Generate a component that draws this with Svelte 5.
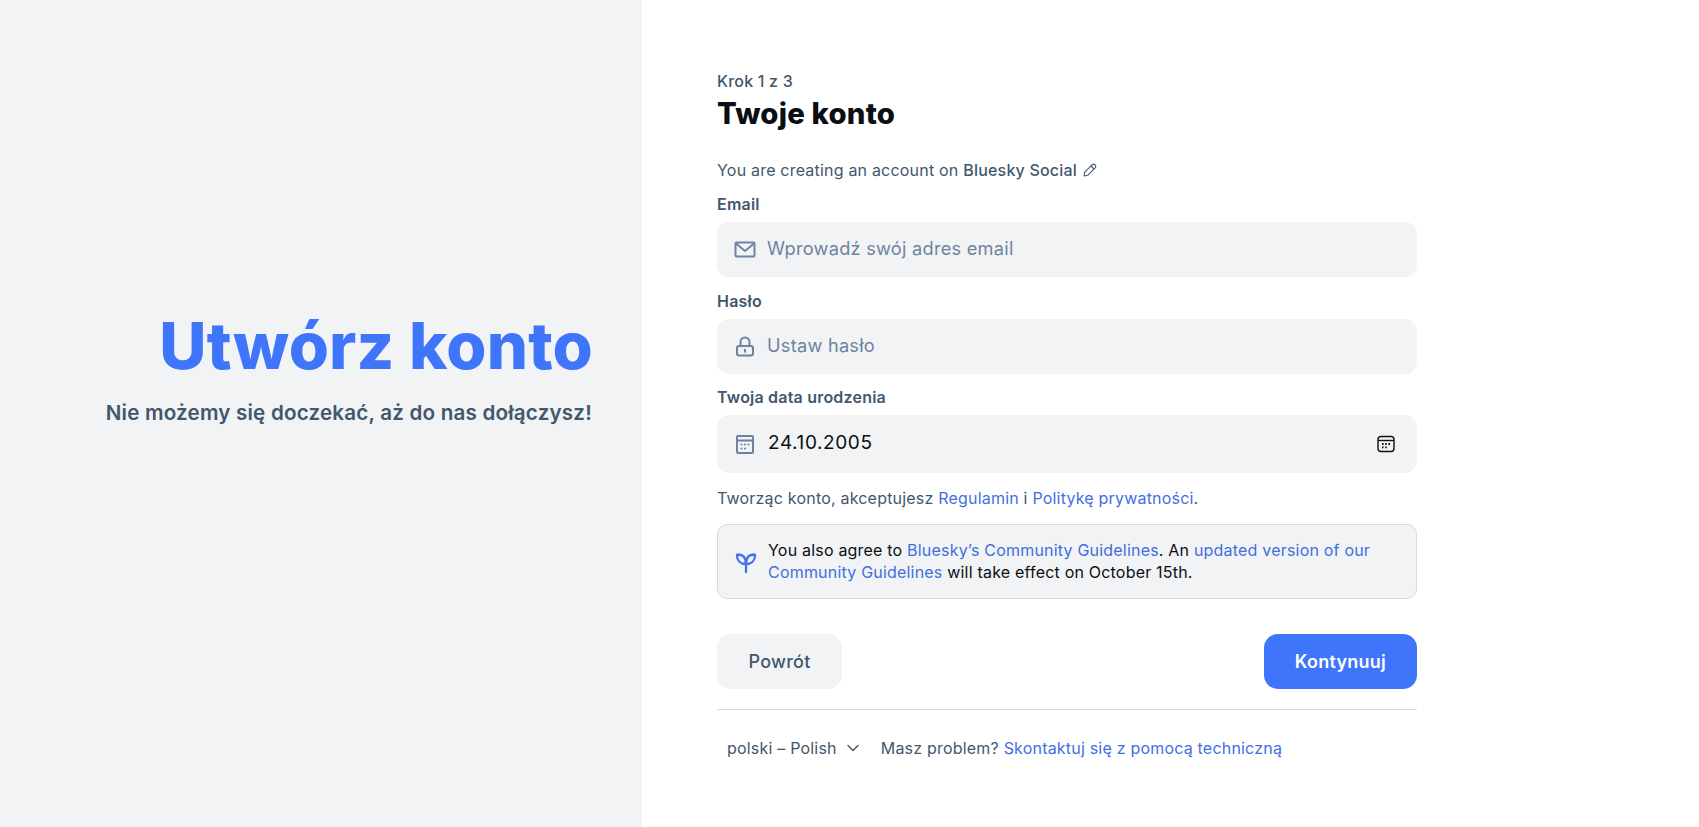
<script>
    let email = $state("");
    let password = $state("");
    let birthDate = $state("24.10.2005");
</script>

<div class="page">
    <aside class="side">
        <h1>Utwórz konto</h1>
        <p>Nie możemy się doczekać, aż do nas dołączysz!</p>
    </aside>

    <main class="content">
        <div class="form">
            <div class="step">Krok 1 z 3</div>
            <h2>Twoje konto</h2>

            <div class="provider">
                You are creating an account on <strong>Bluesky Social</strong>
                <svg class="pencil" viewBox="0 0 24 24" width="16" height="16" fill="none" stroke="#42576c" stroke-width="1.6" stroke-linejoin="round" stroke-linecap="round">
                    <path d="M3 21l.8-5.5L15 4.300a3.200 3.200 0 0 1 4.700 4.500L8.500 20z" />
                    <path d="M13.500 6l4.500 4.500" />
                </svg>
            </div>

            <label class="label" for="email">Email</label>
            <div class="field">
                <svg class="icon" viewBox="0 0 24 24" width="24" height="24" fill="none" stroke="#6f839f" stroke-width="2" stroke-linejoin="round">
                    <rect x="2.5" y="4.5" width="19" height="14" rx="1" />
                    <path d="M3 5.500l9 7.500 9-7.500" />
                </svg>
                <input id="email" type="text" placeholder="Wprowadź swój adres email" bind:value={email} />
            </div>

            <label class="label" for="password">Hasło</label>
            <div class="field tight">
                <svg class="icon" viewBox="0 0 24 24" width="24" height="24" fill="none" stroke="#6f839f" stroke-width="2" stroke-linecap="round">
                    <rect x="4" y="11" width="16" height="9.5" rx="2" />
                    <path d="M7.500 11V7a4.500 4.500 0 0 1 9 0v4" />
                    <path d="M12 14.700v2" />
                </svg>
                <input id="password" type="password" placeholder="Ustaw hasło" bind:value={password} />
            </div>

            <label class="label" for="birth">Twoja data urodzenia</label>
            <div class="field date">
                <svg class="icon" viewBox="0 0 24 24" width="24" height="24" fill="none" stroke="#6f839f" stroke-width="2">
                    <rect x="4" y="4" width="16" height="17" rx="1" />
                    <path d="M4 8.500h16" />
                    <path d="M7.500 12.500h2M11 12.500h2M14.500 12.500h2M7.500 16.500h2M11 16.500h2" stroke-width="1.6" />
                </svg>
                <input id="birth" type="text" bind:value={birthDate} />
                <svg class="picker" viewBox="0 0 18 18" width="18" height="18" fill="none" stroke="#111" stroke-width="1.4">
                    <rect x="1" y="1.5" width="16" height="15" rx="3" />
                    <path d="M1 5.500h16" />
                    <path d="M5 9h1.600M8.200 9h1.600M11.400 9h1.600M5 12.400h1.600M8.200 12.400h1.600" stroke-width="1.8" />
                </svg>
            </div>

            <div class="terms">
                Tworząc konto, akceptujesz <a href="#terms">Regulamin</a> i <a href="#privacy">Politykę prywatności</a>.
            </div>

            <div class="notice">
                <svg class="sprout" viewBox="0 0 24 24" width="24" height="24" fill="none" stroke="#3f72f0" stroke-width="2.3" stroke-linejoin="round" stroke-linecap="round">
                    <path d="M12 22V14" />
                    <path d="M12 14C6.500 14 3 10.500 3 5.500 3 5 3.500 4.500 4 4.500 9 4.500 12 8 12 14z" />
                    <path d="M12 14c5.500 0 9-3.500 9-8.500 0-.5-.5-1-1-1C15 4.500 12 8 12 14z" />
                </svg>
                <div class="notice-text">
                    You also agree to <a href="#guidelines">Bluesky’s Community Guidelines</a>. An <a href="#updated">updated version of our Community Guidelines</a> will take effect on October 15th.
                </div>
            </div>

            <div class="actions">
                <button class="back" type="button">Powrót</button>
                <button class="next" type="button">Kontynuuj</button>
            </div>

            <footer class="footer">
                <div class="lang">
                    polski – Polish
                    <svg viewBox="0 0 14 14" width="14" height="14" fill="none" stroke="#42576c" stroke-width="1.4" stroke-linecap="round" stroke-linejoin="round">
                        <path d="M2 4.500l5 5 5-5" />
                    </svg>
                </div>
                <div>Masz problem? <a href="#help">Skontaktuj się z pomocą techniczną</a></div>
            </footer>
        </div>
    </main>
</div>

<style>
    :global(body) {
        margin: 0;
        background: #fff;
        font-family: Inter, "Liberation Sans", sans-serif;
        letter-spacing: 0.2px;
    }

    .page {
        display: flex;
        height: 827px;
        overflow: hidden;
    }

    .side {
        width: 642px;
        flex: none;
        box-sizing: border-box;
        background: #f1f3f5;
        padding: 0 50px 94px 0;
        display: flex;
        flex-direction: column;
        justify-content: center;
        text-align: right;
    }

    h1 {
        margin: 0 -1px 0 0;
        font-size: 65px;
        line-height: 78px;
        font-weight: 800;
        color: #3f75fb;
    }

    .side p {
        margin: 0;
        padding-top: 14px;
        font-size: 20.6px;
        line-height: 28px;
        font-weight: 600;
        color: #42576c;
    }

    .content {
        flex: 1;
        padding: 71px 0 0 75px;
    }

    .form {
        width: 700px;
    }

    .step {
        margin-bottom: 1px;
        font-size: 16px;
        line-height: 20px;
        font-weight: 500;
        color: #42576c;
    }

    h2 {
        margin: 0;
        font-size: 29.3px;
        line-height: 44px;
        font-weight: 800;
        color: #0b0f14;
    }

    .provider {
        margin: 22px 0 12px;
        font-size: 16px;
        line-height: 24px;
        color: #42576c;
    }

    .provider strong {
        font-weight: 500;
    }

    .pencil {
        vertical-align: -2px;
    }

    .label {
        display: block;
        margin-bottom: 8px;
        font-size: 16px;
        line-height: 20px;
        font-weight: 600;
        color: #42576c;
    }

    .field {
        height: 55px;
        margin-bottom: 14px;
        box-sizing: border-box;
        padding: 0 16px;
        display: flex;
        align-items: center;
        gap: 10px;
        background: #f1f3f5;
        border-radius: 12px;
    }

    .field.tight {
        margin-bottom: 13px;
    }

    .field.date {
        height: 58px;
    }

    .field input {
        flex: 1;
        min-width: 0;
        border: 0;
        outline: 0;
        padding: 0 0 4px;
        background: transparent;
        font-family: inherit;
        font-size: 18.2px;
        letter-spacing: 0.25px;
        color: #0b0f14;
    }

    .field input::placeholder {
        color: #6f839f;
        opacity: 1;
    }

    .date input {
        margin-left: 1px;
        padding-bottom: 3px;
        font-size: 19px;
        letter-spacing: 0.6px;
    }

    .icon {
        flex: none;
    }

    .picker {
        flex: none;
        margin-right: 6px;
    }

    a {
        color: #3f6fe0;
        text-decoration: none;
    }

    .terms {
        margin-top: 2px;
        font-size: 16px;
        line-height: 22px;
        color: #42576c;
    }

    .notice {
        margin-top: 15px;
        box-sizing: border-box;
        height: 75px;
        padding: 0 16px;
        display: flex;
        align-items: center;
        gap: 10px;
        background: #f1f3f5;
        border: 1px solid #d4dbe2;
        border-radius: 10px;
        font-size: 16px;
        line-height: 22px;
        color: #0b0f14;
    }

    .notice-text {
        margin-bottom: 2px;
    }

    .sprout {
        flex: none;
    }

    .actions {
        margin-top: 35px;
        display: flex;
        justify-content: space-between;
        padding-bottom: 20px;
        border-bottom: 1px solid #d4dbe2;
    }

    button {
        height: 55px;
        border: 0;
        border-radius: 14px;
        padding: 0 31px;
        font-family: inherit;
        font-size: 18px;
        letter-spacing: 0.25px;
        font-weight: 500;
    }

    .back {
        padding: 0 31.5px;
        background: #f1f3f5;
        color: #42576c;
    }

    .next {
        background: #3f75fb;
        color: #fff;
        font-weight: 600;
    }

    .footer {
        margin-top: 27px;
        padding-left: 10px;
        display: flex;
        align-items: center;
        gap: 21px;
        font-size: 16px;
        line-height: 22px;
        color: #42576c;
    }

    .lang {
        display: flex;
        align-items: center;
        gap: 9px;
    }
</style>
